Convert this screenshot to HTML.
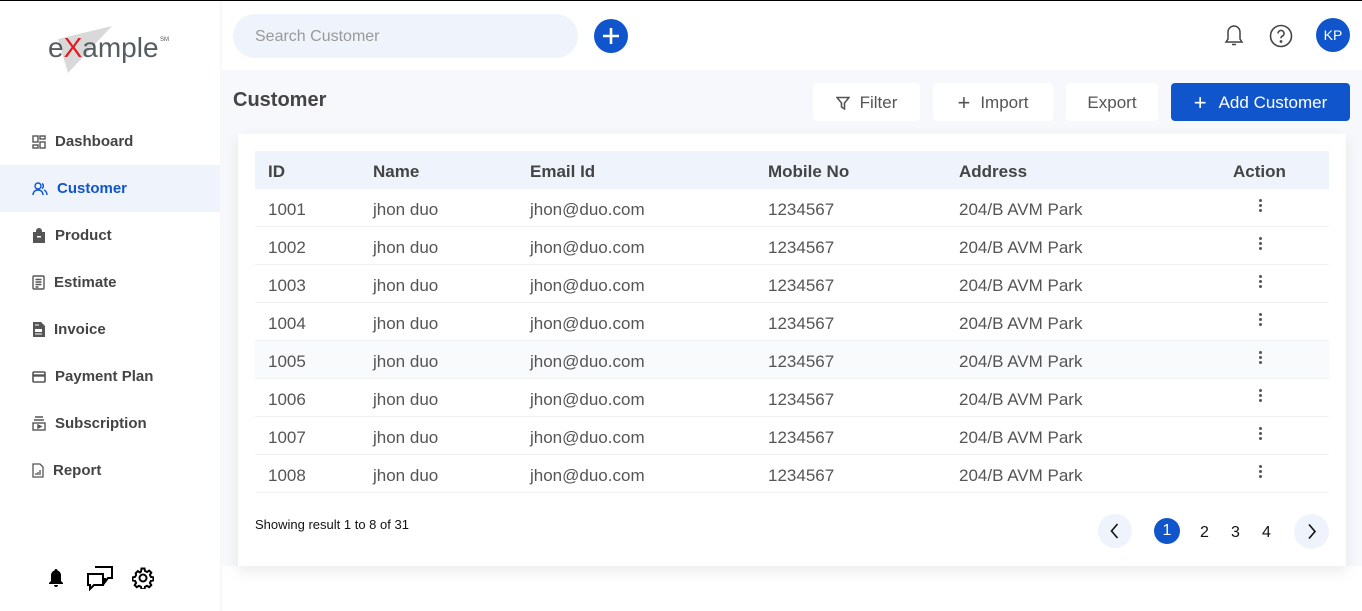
<!DOCTYPE html>
<html><head><meta charset="utf-8"><style>
*{margin:0;padding:0;box-sizing:border-box}
body{width:1362px;height:611px;position:relative;font-family:"Liberation Sans",sans-serif;background:#fff;overflow:hidden;color:#444}
.abs{position:absolute}
.topline{left:0;top:0;width:1362px;height:1px;background:#000}
.side{left:0;top:1px;width:220px;height:610px;background:#fff}
.main{left:222px;top:70px;width:1140px;height:496px;background:#f7f8fb}
.nav{position:absolute;left:0;width:220px;height:47px;display:flex;align-items:center;padding-left:32px;font-weight:bold;font-size:15px;color:#444}
.nav svg{margin-right:9px}
.nav.act{background:#eef3fc;color:#1155cc}
.btn{position:absolute;top:83px;height:38px;background:#fff;border-radius:4px;display:flex;align-items:center;justify-content:center;font-size:17px;color:#555;padding-top:2px}
.card{left:238px;top:134px;width:1108px;height:432px;background:#fff;box-shadow:0 6px 14px rgba(0,0,0,.08)}
.row{position:absolute;left:17px;width:1074px;height:38px;border-bottom:1px solid #f0f1f3;font-size:17px;color:#555}
.row span{position:absolute;top:11px}
.hd{background:#eef3fc;font-weight:bold;color:#444;border:none}
.dots{position:absolute;left:1004px;top:10px;width:3px}
.dots i{display:block;width:3px;height:3px;border-radius:50%;background:#555;margin-bottom:2px}
</style></head><body>
<div class="abs topline"></div>
<div class="abs side">
  <svg class="abs" style="left:46px;top:22px" width="125" height="52"><polygon points="12,16 66,3 22,50" fill="#d9d9d9"/><text x="2" y="34" font-size="28" fill="#555d63" font-family="Liberation Sans">e<tspan fill="#e31b23">X</tspan>ample</text><text x="114" y="18" font-size="6" fill="#555">SM</text></svg>
  <div class="nav" style="top:117px"><svg width="14" height="14" fill="none" stroke="#555" stroke-width="1.4"><rect x="1" y="1" width="5" height="6"/><rect x="8" y="1" width="5" height="3"/><rect x="1" y="10" width="5" height="3"/><rect x="8" y="7" width="5" height="6"/></svg>Dashboard</div>
  <div class="nav act" style="top:164px"><svg width="16" height="14" fill="none" stroke="#1155cc" stroke-width="1.4"><circle cx="6" cy="4" r="3"/><path d="M1 13c0-3 2-5 5-5s5 2 5 5M10 1.5a3 3 0 0 1 0 5M12 8c2 1 3 3 3 5"/></svg>Customer</div>
  <div class="nav" style="top:211px"><svg width="14" height="15" fill="#555"><path d="M4 4V3a3 3 0 0 1 6 0v1h3v11H1V4z"/><rect x="5" y="8" width="4" height="1.5" fill="#fff"/></svg>Product</div>
  <div class="nav" style="top:258px"><svg width="13" height="15" fill="none" stroke="#555" stroke-width="1.4"><rect x="1" y="1" width="11" height="13" rx="1"/><path d="M3.5 4.5h6M3.5 7h6M3.5 9.5h6M3.5 12h3"/></svg>Estimate</div>
  <div class="nav" style="top:305px"><svg width="13" height="15" fill="#555"><path d="M1 0h8l4 4v11H1z"/><path d="M3 7h7v3H3z" fill="#fff"/><path d="M3 3h4M3 12h7" stroke="#fff"/></svg>Invoice</div>
  <div class="nav" style="top:352px"><svg width="14" height="12" fill="none" stroke="#555" stroke-width="1.6"><rect x="1" y="1" width="12" height="10" rx="1"/><path d="M1 4.5h12" stroke-width="2.4"/></svg>Payment Plan</div>
  <div class="nav" style="top:399px"><svg width="14" height="15" fill="none" stroke="#555" stroke-width="1.4"><path d="M3 1h8M2 4h10"/><rect x="1" y="7" width="12" height="7"/><path d="M6 9l3 1.5-3 1.5z" fill="#555"/></svg>Subscription</div>
  <div class="nav" style="top:446px"><svg width="12" height="15" fill="none" stroke="#555" stroke-width="1.3"><path d="M1 1h7l3 3v10H1z"/><path d="M4 12v-2M6 12V9M8 12V7"/></svg>Report</div>
  <svg class="abs" style="left:47px;top:567px" width="18" height="20" fill="#000"><path d="M9 1a1.5 1.5 0 0 1 1.5 1.5A5 5 0 0 1 14 8v5l2 2v1H2v-1l2-2V8a5 5 0 0 1 3.5-5.5A1.5 1.5 0 0 1 9 1zM7 17h4a2 2 0 0 1-4 0z"/></svg>
  <svg class="abs" style="left:86px;top:565px" width="27" height="26" fill="none" stroke="#000" stroke-width="2"><path d="M9 1h17v11h-4l-3 4v-4"/><path d="M2 8h15v11H8l-4 4v-4H2z" fill="#fff"/></svg>
  <svg class="abs" style="left:132px;top:566px" width="22" height="22" fill="none" stroke="#000" stroke-width="2"><circle cx="11" cy="11" r="3.5"/><path d="M9.5 1.5h3l.5 2.5 2 1 2.2-1.4 2.1 2.1-1.4 2.2 1 2 2.5.5v3l-2.5.5-1 2 1.4 2.2-2.1 2.1-2.2-1.4-2 1-.5 2.5h-3l-.5-2.5-2-1-2.2 1.4-2.1-2.1 1.4-2.2-1-2-2.5-.5v-3l2.5-.5 1-2L3.7 6.2l2.1-2.1L8 5.5l1-1z"/></svg>
</div>
<div class="abs" style="left:220px;top:1px;width:2px;height:610px;background:#f7f8fb"></div>
<div class="abs main"></div>
<div class="abs" style="left:233px;top:14px;width:345px;height:44px;border-radius:22px;background:#eef3fc;font-size:16px;color:#999;padding:14px 0 0 22px">Search Customer</div>
<svg class="abs" style="left:594px;top:19px" width="34" height="34"><circle cx="17" cy="17" r="17" fill="#1155cc"/><path d="M17 9v16M9 17h16" stroke="#fff" stroke-width="2.6"/></svg>
<svg class="abs" style="left:1224px;top:24px" width="20" height="23" fill="none" stroke="#444" stroke-width="1.5"><path d="M10 2a6 6 0 0 0-6 6v7l-2 3h16l-2-3V8a6 6 0 0 0-6-6zM8 20.5h4"/></svg>
<svg class="abs" style="left:1269px;top:24px" width="24" height="24" fill="none" stroke="#444" stroke-width="1.6"><circle cx="12" cy="12" r="10.5"/><path d="M9 9.5a3 3 0 1 1 4 2.8c-.8.4-1 1-1 2"/><circle cx="12" cy="17.5" r=".6" fill="#444"/></svg>
<div class="abs" style="left:1316px;top:18px;width:34px;height:34px;border-radius:50%;background:#1155cc;color:#fff;font-size:14px;text-align:center;line-height:34px">KP</div>
<div class="abs" style="left:233px;top:89px;font-size:20px;font-weight:bold;color:#444">Customer</div>
<div class="btn" style="left:813px;width:107px"><svg width="14" height="14" fill="none" stroke="#555" stroke-width="1.6" style="margin-right:10px"><path d="M1 1.5h12L8.5 7v6L5.5 11V7z"/></svg>Filter</div>
<div class="btn" style="left:933px;width:120px"><span style="font-size:22px;margin-right:10px;font-weight:300">+</span>Import</div>
<div class="btn" style="left:1066px;width:92px">Export</div>
<div class="btn" style="left:1171px;width:179px;background:#1155cc;color:#fff"><span style="font-size:22px;margin-right:12px">+</span>Add Customer</div>
<div class="abs card">
  <div class="row hd" style="top:17px"><span style="left:13px">ID</span><span style="left:118px">Name</span><span style="left:275px">Email Id</span><span style="left:513px">Mobile No</span><span style="left:704px">Address</span><span style="left:978px">Action</span></div>
  <div class="row" style="top:55px"><span style="left:13px">1001</span><span style="left:118px">jhon duo</span><span style="left:275px">jhon@duo.com</span><span style="left:513px">1234567</span><span style="left:704px">204/B AVM Park</span><div class="dots"><i></i><i></i><i></i></div></div>
  <div class="row" style="top:93px"><span style="left:13px">1002</span><span style="left:118px">jhon duo</span><span style="left:275px">jhon@duo.com</span><span style="left:513px">1234567</span><span style="left:704px">204/B AVM Park</span><div class="dots"><i></i><i></i><i></i></div></div>
  <div class="row" style="top:131px"><span style="left:13px">1003</span><span style="left:118px">jhon duo</span><span style="left:275px">jhon@duo.com</span><span style="left:513px">1234567</span><span style="left:704px">204/B AVM Park</span><div class="dots"><i></i><i></i><i></i></div></div>
  <div class="row" style="top:169px"><span style="left:13px">1004</span><span style="left:118px">jhon duo</span><span style="left:275px">jhon@duo.com</span><span style="left:513px">1234567</span><span style="left:704px">204/B AVM Park</span><div class="dots"><i></i><i></i><i></i></div></div>
  <div class="row" style="top:207px;background:#f9fafb"><span style="left:13px">1005</span><span style="left:118px">jhon duo</span><span style="left:275px">jhon@duo.com</span><span style="left:513px">1234567</span><span style="left:704px">204/B AVM Park</span><div class="dots"><i></i><i></i><i></i></div></div>
  <div class="row" style="top:245px"><span style="left:13px">1006</span><span style="left:118px">jhon duo</span><span style="left:275px">jhon@duo.com</span><span style="left:513px">1234567</span><span style="left:704px">204/B AVM Park</span><div class="dots"><i></i><i></i><i></i></div></div>
  <div class="row" style="top:283px"><span style="left:13px">1007</span><span style="left:118px">jhon duo</span><span style="left:275px">jhon@duo.com</span><span style="left:513px">1234567</span><span style="left:704px">204/B AVM Park</span><div class="dots"><i></i><i></i><i></i></div></div>
  <div class="row" style="top:321px"><span style="left:13px">1008</span><span style="left:118px">jhon duo</span><span style="left:275px">jhon@duo.com</span><span style="left:513px">1234567</span><span style="left:704px">204/B AVM Park</span><div class="dots"><i></i><i></i><i></i></div></div>
  <div class="abs" style="left:17px;top:383px;font-size:13px;color:#111">Showing result 1 to 8 of 31</div>
  <div class="abs" style="left:860px;top:380px;width:34px;height:34px;border-radius:50%;background:#eef3fc"><svg width="34" height="34" fill="none" stroke="#111" stroke-width="1.6"><path d="M19.5 10l-6 7 6 7"/></svg></div>
  <div class="abs" style="left:916px;top:384px;width:26px;height:26px;border-radius:50%;background:#1155cc;color:#fff;font-size:16px;text-align:center;line-height:26px">1</div>
  <div class="abs" style="left:962px;top:390px;font-size:16px;color:#111">2</div>
  <div class="abs" style="left:993px;top:390px;font-size:16px;color:#111">3</div>
  <div class="abs" style="left:1024px;top:390px;font-size:16px;color:#111">4</div>
  <div class="abs" style="left:1056px;top:380px;width:35px;height:35px;border-radius:50%;background:#eef3fc"><svg width="35" height="35" fill="none" stroke="#111" stroke-width="1.6"><path d="M15 10.5l6 7-6 7"/></svg></div>
</div>
</body></html>
